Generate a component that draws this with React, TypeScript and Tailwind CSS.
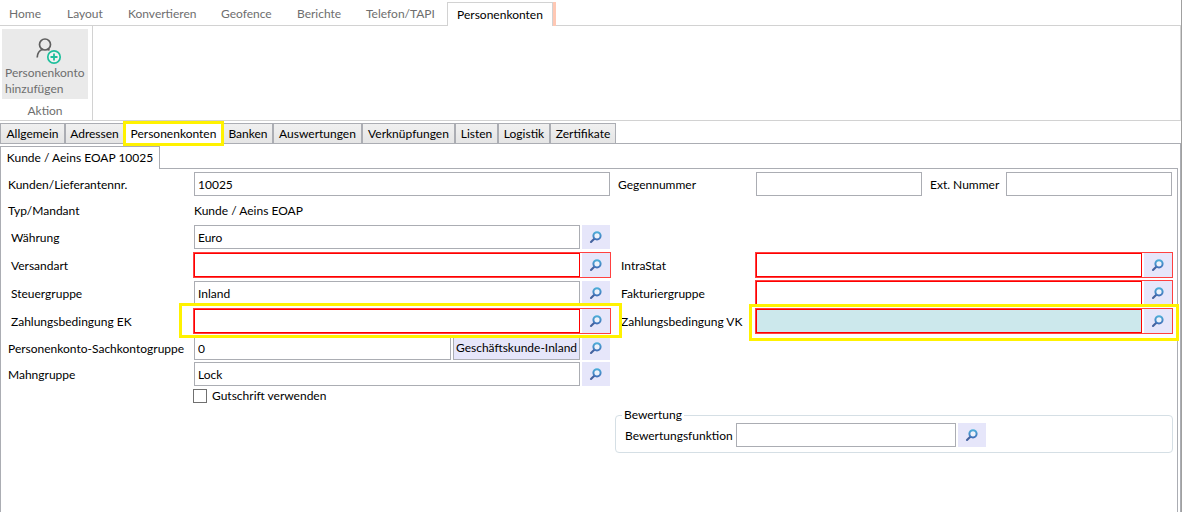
import React from "react";

const ribbonTabs = [
  { name: "Home", width: "w-[58px]" },
  { name: "Layout", width: "w-[61px]" },
  { name: "Konvertieren", width: "w-[93px]" },
  { name: "Geofence", width: "w-[76px]" },
  { name: "Berichte", width: "w-[69px]" },
  { name: "Telefon/TAPI", width: "w-[81px]" },
];

const pageTabs = [
  { name: "Allgemein", width: "w-[65px]" },
  { name: "Adressen", width: "w-[59px]" },
  { name: "Personenkonten", width: "w-[99px]", active: true },
  { name: "Banken", width: "w-[50px]" },
  { name: "Auswertungen", width: "w-[89px]" },
  { name: "Verknüpfungen", width: "w-[93px]" },
  { name: "Listen", width: "w-[43px]" },
  { name: "Logistik", width: "w-[52px]" },
  { name: "Zertifikate", width: "w-[66px]" },
];

function PersonAddIcon() {
  return (
    <svg width="34" height="28" viewBox="0 0 34 28" fill="none" aria-hidden="true">
      <circle cx="17" cy="7.5" r="5.5" stroke="#5f5f5f" strokeWidth="1.7" />
      <path d="M9.200 20.500c.2-4.600 2.300-7.300 5.600-8.300M19.500 12l2 1.200" stroke="#5f5f5f" strokeWidth="1.700" />
      <circle cx="26" cy="20" r="6.200" fill="#f2f2f2" stroke="#1fbf9c" strokeWidth="1.700" />
      <path d="M26 16.500v7M22.500 20h7" stroke="#1fbf9c" strokeWidth="1.800" />
    </svg>
  );
}

function SearchIcon() {
  return (
    <svg width="14" height="14" viewBox="0 0 14 14" fill="none" aria-hidden="true">
      <defs>
        <linearGradient id="lens" x1="8" y1="1" x2="8" y2="10" gradientUnits="userSpaceOnUse">
          <stop stopColor="#4fb4dc" />
          <stop offset="1" stopColor="#416fb8" />
        </linearGradient>
      </defs>
      <path d="M5.300 8.700L2 12" stroke="#45639f" strokeWidth="2.100" strokeLinecap="round" />
      <circle cx="8" cy="5.800" r="3.600" fill="#eef2fb" stroke="url(#lens)" strokeWidth="2" />
    </svg>
  );
}

function LookupButton({ label }: { label: string }) {
  return (
    <button type="button" aria-label={label} className="flex h-6 w-7 shrink-0 items-center justify-center bg-[#e6e6fa]">
      <SearchIcon />
    </button>
  );
}

function Highlight({ className }: { className: string }) {
  return <div className={`pointer-events-none absolute z-10 border-3 border-[#fff200] ${className}`} />;
}

const inputBase = "h-6 min-w-0 border px-[3px] outline-none";

type LookupProps = {
  id: string;
  label: string;
  value?: string;
  required?: boolean;
  focused?: boolean;
  labelWidth: string;
  indent?: boolean;
  height?: string;
  highlight?: string;
  extra?: string;
};

function LookupRow({ id, label, value = "", required, focused, labelWidth, indent, height = "h-7", highlight, extra }: LookupProps) {
  return (
    <div className={`flex items-center ${height}`}>
      <label htmlFor={id} className={`shrink-0 whitespace-nowrap pt-[2px] ${labelWidth} ${indent ? "pl-[3px]" : ""}`}>
        {label}
      </label>
      <div className={`relative flex min-w-0 flex-1 gap-[2px] ${required ? "outline outline-[#ff4040]" : ""}`}>
        <input
          id={id}
          defaultValue={value}
          className={`${inputBase} flex-1 ${required ? "border-[#ff0000]" : "border-[#abadb3]"} ${focused ? "bg-[#cce8ec]" : "bg-white"}`}
        />
        {extra && (
          <button type="button" className="h-6 w-[127px] shrink-0 whitespace-nowrap border border-[#abadb3] bg-[#e6e6fa]">
            {extra}
          </button>
        )}
        <LookupButton label={`${label} suchen`} />
        {highlight && <Highlight className={highlight} />}
      </div>
    </div>
  );
}

export default function App() {
  const left = "w-[186px]";
  const right = "w-[138px]";
  return (
    <div className="flex min-h-screen bg-white font-['Lato','Open_Sans',sans-serif] text-[12px] leading-4 text-black">
      <div className="flex min-w-0 flex-1 flex-col">
        <nav className="flex h-[26px] items-end border-b border-[#d2d2d2] text-[#6e6e6e]">
          <div className="flex h-6 pl-[9px]">
            {ribbonTabs.map((t) => (
              <button key={t.name} type="button" className={`whitespace-nowrap pt-px text-left ${t.width}`}>
                {t.name}
              </button>
            ))}
          </div>
          <button type="button" className="-mb-px h-6 w-[106px] whitespace-nowrap border border-b-0 border-[#d2d2d2] bg-white text-black">
            Personenkonten
          </button>
          <div className="-mb-px h-6 w-[3px] bg-[#ffc8b4]" />
        </nav>

        <section className="flex h-[95px] border-b border-r border-[#d2d2d2] text-[#6e6e6e]">
          <div className="flex w-[93px] flex-col border-r border-[#d2d2d2] pl-[2px] pt-[3px]">
            <button type="button" className="flex h-[70px] w-[86px] flex-col items-center bg-[#eaeaea] pt-2">
              <PersonAddIcon />
              <span className="w-full whitespace-nowrap pl-[3px] text-left">
                Personenkonto
                <br />
                hinzufügen
              </span>
            </button>
            <span className="w-[86px] pt-1 text-center">Aktion</span>
          </div>
        </section>

        <div className="flex min-h-0 flex-1 flex-col pt-[2px]">
          <div className="flex h-[21px] border-b border-[#abadb3]" role="tablist">
            {pageTabs.map((t) =>
              t.active ? (
                <button key={t.name} type="button" role="tab" aria-selected="true" className={`relative h-[21px] whitespace-nowrap bg-white ${t.width}`}>
                  {t.name}
                  <Highlight className="-inset-x-px -bottom-[2px] -top-[2px]" />
                </button>
              ) : (
                <button
                  key={t.name}
                  type="button"
                  role="tab"
                  aria-selected="false"
                  className={`whitespace-nowrap border-l border-r border-t border-[#abadb3] bg-linear-to-b from-[#f0f0f0] to-[#e5e5e5] ${t.width}`}
                >
                  {t.name}
                </button>
              ),
            )}
          </div>

          <div className="flex flex-1 flex-col border-r border-[#abadb3] pr-[2px] pt-[2px]">
            <div className="flex h-[23px] border-b border-[#abadb3]">
              <button type="button" className="-mb-px w-[160px] whitespace-nowrap border border-b-0 border-[#abadb3] bg-white">
                Kunde / Aeins EOAP 10025
              </button>
            </div>

            <form className="flex-1 border-x border-[#abadb3] pl-[7px] pr-[5px] pt-[2px]">
              <div className="grid grid-cols-[602fr_554fr] gap-2">
                <div>
                  <div className="flex h-[26px] items-center">
                    <label htmlFor="nr" className={`shrink-0 pt-[2px] ${left}`}>Kunden/Lieferantennr.</label>
                    <input id="nr" defaultValue="10025" className={`${inputBase} flex-1 border-[#abadb3]`} />
                  </div>
                  <div className="flex h-[26px] items-center pt-[2px]">
                    <span className={`shrink-0 ${left}`}>Typ/Mandant</span>
                    <span>Kunde / Aeins EOAP</span>
                  </div>
                  <LookupRow id="waehrung" label="Währung" value="Euro" labelWidth={left} indent />
                  <LookupRow id="versand" label="Versandart" required labelWidth={left} indent />
                  <LookupRow id="steuer" label="Steuergruppe" value="Inland" labelWidth={left} indent />
                  <LookupRow
                    id="zek"
                    label="Zahlungsbedingung EK"
                    required
                    labelWidth={left}
                    indent
                    highlight="-bottom-[5px] -left-[15px] -right-3 -top-[6px]"
                  />
                  <LookupRow
                    id="sachkonto"
                    label="Personenkonto-Sachkontogruppe"
                    value="0"
                    labelWidth={left}
                    height="h-[26px]"
                    extra="Geschäftskunde-Inland"
                  />
                  <LookupRow id="mahn" label="Mahngruppe" value="Lock" labelWidth={left} height="h-[26px]" />
                  <div className="flex h-[18px] items-center pl-[185px]">
                    <label className="flex items-center gap-[5px]">
                      <input type="checkbox" className="size-[14px] appearance-none border border-[#707070] bg-white checked:bg-[#707070]" />
                      Gutschrift verwenden
                    </label>
                  </div>
                </div>

                <div>
                  <div className="flex h-[26px] items-center">
                    <label htmlFor="gegen" className={`shrink-0 pt-[2px] ${right}`}>Gegennummer</label>
                    <input id="gegen" className={`${inputBase} flex-1 border-[#abadb3]`} />
                    <label htmlFor="ext" className="w-[84px] shrink-0 whitespace-nowrap pl-2 pt-[2px]">Ext. Nummer</label>
                    <input id="ext" className={`${inputBase} flex-1 border-[#abadb3]`} />
                  </div>
                  <div className="pt-[54px]">
                    <LookupRow id="intra" label="IntraStat" required labelWidth={right} indent />
                    <LookupRow id="faktur" label="Fakturiergruppe" required labelWidth={right} indent />
                    <LookupRow
                      id="zvk"
                      label="Zahlungsbedingung VK"
                      required
                      focused
                      labelWidth={right}
                      indent
                      highlight="-bottom-2 -left-[7px] -right-[7px] -top-[5px]"
                    />
                  </div>
                  <fieldset className="-ml-[3px] -mr-px mt-[72px] h-[46px] rounded border border-[#d5dfe5] pl-[9px]">
                    <legend className="-ml-[3px] px-[2px]">Bewertung</legend>
                    <div className="flex items-center gap-[2px]">
                      <label htmlFor="bewertung" className="w-[109px] shrink-0 whitespace-nowrap pt-[2px]">Bewertungsfunktion</label>
                      <input id="bewertung" className={`${inputBase} w-[220px] border-[#abadb3]`} />
                      <LookupButton label="Bewertungsfunktion suchen" />
                    </div>
                  </fieldset>
                </div>
              </div>
            </form>
          </div>
        </div>
      </div>
      <div className="w-px bg-[#a0a0a0]" />
    </div>
  );
}
